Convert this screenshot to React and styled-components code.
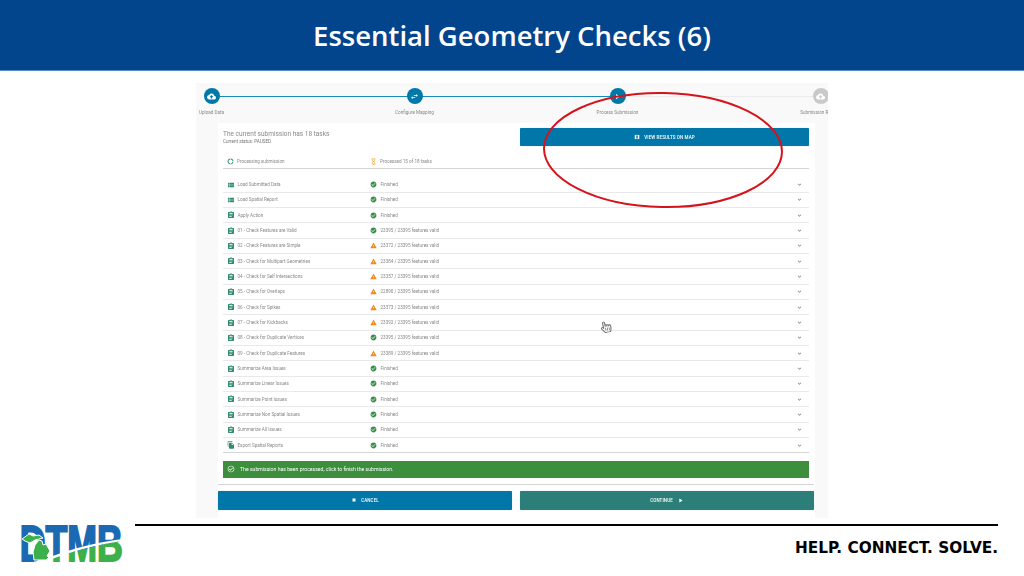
import styled, { createGlobalStyle } from "styled-components";
import {
    MdAssignment,
    MdCheckCircle,
    MdCloudUpload,
    MdDonutLarge,
    MdExpandMore,
    MdFileCopy,
    MdMap,
    MdOutlineCheckCircle,
    MdOutlineHourglassEmpty,
    MdPlayArrow,
    MdStop,
    MdSwapHoriz,
    MdViewList,
    MdWarning,
} from "react-icons/md";
import { FaRegHandPointer } from "react-icons/fa";

const GlobalStyle = createGlobalStyle`
    html, body {
        margin: 0;
        padding: 0;
        background: #fff;
    }
    * {
        box-sizing: border-box;
    }
`;

const Slide = styled.div`
    position: relative;
    width: 1024px;
    height: 576px;
    overflow: hidden;
    display: flex;
    flex-direction: column;
    background: #fff;
`;

const Header = styled.header`
    height: 71px;
    flex: none;
    display: flex;
    align-items: center;
    justify-content: center;
    background: #03458c;
    border-bottom: 1px solid #5b8fc4;
`;

const Title = styled.h1`
    margin: 0;
    color: #fff;
    font: 600 27.5px "Open Sans", sans-serif;
`;

const Panel = styled.main`
    position: relative;
    width: 632px;
    height: 435px;
    margin: 12px auto 0;
    background: #f9f9f9;
    overflow: hidden;
    font-family: Roboto, sans-serif;
    filter: blur(0.35px);
`;

const Stepper = styled.div`
    display: flex;
    height: 40px;
    padding-top: 5px;
    margin-left: -86px;
`;

const Step = styled.div`
    position: relative;
    flex: none;
    width: 203px;
    display: flex;
    flex-direction: column;
    align-items: center;
    &::after {
        content: "";
        display: ${(p) => (p.$last ? "none" : "block")};
        position: absolute;
        top: 7.5px;
        left: 101px;
        width: 203px;
        height: 1px;
        background: ${(p) => (p.$lineOn ? "#1a8abb" : "#ececec")};
    }
`;

const StepDot = styled.span`
    position: relative;
    z-index: 1;
    width: 16px;
    height: 16px;
    border-radius: 50%;
    display: flex;
    align-items: center;
    justify-content: center;
    color: #fff;
    font-size: 9px;
    background: ${(p) => (p.$off ? "#c9c9c9" : "#0078a8")};
`;

const StepLabel = styled.span`
    margin-top: 5.5px;
    font-size: 4.6px;
    line-height: 6px;
    color: #888;
    white-space: nowrap;
`;

const Card = styled.section`
    width: 597px;
    margin-left: 22px;
    height: 395px;
    background: #fff;
`;

const Content = styled.div`
    padding: 5px 6px 0 5px;
`;

const Summary = styled.div`
    display: grid;
    grid-template-columns: 297px 1fr;
    height: 18px;
`;

const SummaryTitle = styled.div`
    padding-top: 1.5px;
    font-size: 6.5px;
    line-height: 8px;
    color: #888;
`;

const SummaryStatus = styled.div`
    font-size: 4.6px;
    line-height: 7px;
    margin-top: 0.5px;
    color: #777;
`;

const Button = styled.button`
    height: ${(p) => p.$height || "19px"};
    border: 0;
    border-radius: 1px;
    padding: 0;
    display: flex;
    align-items: center;
    justify-content: center;
    gap: ${(p) => p.$gap || "4px"};
    color: #fff;
    font: 500 4.5px Roboto, sans-serif;
    letter-spacing: 0.1px;
    background: ${(p) => p.$bg || "#0077a8"};
    box-shadow: 0 0 1px rgba(0, 80, 120, 0.45);
`;

const Progress = styled.div`
    height: 23px;
    padding: 9px 0 0 4px;
    display: grid;
    grid-template-columns: 143px 1fr;
    border-bottom: 1px solid #d5d5d5;
    color: #888;
    font-size: 4.6px;
`;

const Cell = styled.div`
    display: flex;
    align-items: center;
    gap: ${(p) => p.$gap || "3px"};
    line-height: 7px;
    white-space: nowrap;
`;

const TaskList = styled.div`
    margin-top: 8.5px;
    display: grid;
    grid-template-rows: repeat(18, 15.33px);
`;

const TaskRow = styled.div`
    display: grid;
    grid-template-columns: 143.5px 1fr 12px;
    align-items: center;
    padding: 0 6px 0 3.5px;
    border-bottom: 1px solid #e9e9e9;
    color: #888;
    font-size: 4.6px;
    &:last-child {
        border-bottom-color: #d5d5d5;
    }
`;

const Chevron = styled(MdExpandMore)`
    justify-self: end;
    font-size: 7px;
    color: #777;
`;

const Banner = styled.div`
    height: 17px;
    margin-top: 7.5px;
    padding-left: 4px;
    display: flex;
    align-items: center;
    gap: 5px;
    background: #3d8f3e;
    color: #fff;
    font-size: 5.15px;
`;

const Actions = styled.div`
    margin-top: 6px;
    padding-top: 6px;
    width: 596px;
    display: grid;
    grid-template-columns: 294px 294px;
    gap: 8px;
    border-top: 1px solid #d5d5d5;
`;

const Ellipse = styled.svg`
    position: absolute;
    left: 536px;
    top: 85px;
    pointer-events: none;
`;

const Cursor = styled(FaRegHandPointer)`
    position: absolute;
    left: 600px;
    top: 321px;
    font-size: 12px;
    color: #777;
    transform: rotate(-12deg);
`;

const Footer = styled.footer`
    position: relative;
    flex: 1;
    display: grid;
    grid-template-columns: 103px 1fr;
    column-gap: 13px;
    padding: 6px 26px 0 19px;
`;

const Logo = styled.svg`
    display: block;
    overflow: visible;
`;

const FooterRight = styled.div`
    display: flex;
    flex-direction: column;
    align-items: flex-end;
`;

const Rule = styled.div`
    align-self: stretch;
    height: 2px;
    background: #000;
`;

const Motto = styled.div`
    margin-top: 13px;
    color: #000;
    font: 700 15.3px "DejaVu Sans", sans-serif;
    line-height: 18px;
`;

const tasks = [
    ["list", "Load Submitted Data", "Finished"],
    ["list", "Load Spatial Report", "Finished"],
    ["note", "Apply Action", "Finished"],
    ["note", "01 - Check Features are Valid", "23395"],
    ["note", "02 - Check Features are Simple", "23372", true],
    ["note", "03 - Check for Multipart Geometries", "23384", true],
    ["note", "04 - Check for Self Intersections", "23357", true],
    ["note", "05 - Check for Overlaps", "22890", true],
    ["note", "06 - Check for Spikes", "23373", true],
    ["note", "07 - Check for Kickbacks", "23392", true],
    ["note", "08 - Check for Duplicate Vertices", "23395"],
    ["note", "09 - Check for Duplicate Features", "23389", true],
    ["note", "Summarize Area Issues", "Finished"],
    ["note", "Summarize Linear Issues", "Finished"],
    ["note", "Summarize Point Issues", "Finished"],
    ["note", "Summarize Non Spatial Issues", "Finished"],
    ["note", "Summarize All Issues", "Finished"],
    ["copy", "Export Spatial Reports", "Finished"],
];

const taskIcons = { list: MdViewList, note: MdAssignment, copy: MdFileCopy };

const Task = ({ icon, name, result, warn }) => {
    const Icon = taskIcons[icon];
    const text = result === "Finished" ? result : `${result} / 23395 features valid`;
    return (
        <TaskRow>
            <Cell>
                <Icon size={8} color="#2f8a70" />
                {name}
            </Cell>
            <Cell $gap="3.5px">
                {warn ? (
                    <MdWarning size={7} color="#ef8b1d" />
                ) : (
                    <MdCheckCircle size={7} color="#388e4a" />
                )}
                {text}
            </Cell>
            <Chevron />
        </TaskRow>
    );
};

const DtmbLogo = () => (
    <Logo width="103" height="38" viewBox="0 0 103 38">
        <defs>
            <linearGradient
                id="logoFill"
                gradientUnits="userSpaceOnUse"
                x1="86"
                y1="15.75"
                x2="89.5"
                y2="35.75"
            >
                <stop offset="0.5" stopColor="#1a69b2" />
                <stop offset="0.5" stopColor="#3cb04a" />
            </linearGradient>
        </defs>
        <text
            x="1"
            y="36.5"
            transform="scale(0.715 1)"
            fontFamily="Liberation Sans"
            fontWeight="700"
            fontSize="50"
            fill="url(#logoFill)"
            stroke="url(#logoFill)"
            strokeWidth="2"
        >
            DTMB
        </text>
        <path d="M26 35 C46 27 72 19 103 15 L103 17 C74 21 48 29 28 37 Z" fill="#fff" />
        <path
            d="M3 15 L10 10 L14 12 L20 11 L24 14 L16 16 L11 19 L6 17 Z M15 36 L14 28 L16 21 L20 16 L23 17 L24 21 L27 20 L31 27 L28 32 L30 33 L27 36 Z"
            fill="#3cb04a"
            stroke="#fff"
            strokeWidth="1"
        />
    </Logo>
);

const App = () => (
    <Slide>
        <GlobalStyle />
        <Header>
            <Title>Essential Geometry Checks (6)</Title>
        </Header>
        <Panel>
            <Stepper>
                <Step $lineOn>
                    <StepDot>
                        <MdCloudUpload />
                    </StepDot>
                    <StepLabel>Upload Data</StepLabel>
                </Step>
                <Step $lineOn>
                    <StepDot>
                        <MdSwapHoriz />
                    </StepDot>
                    <StepLabel>Configure Mapping</StepLabel>
                </Step>
                <Step>
                    <StepDot>
                        <MdPlayArrow />
                    </StepDot>
                    <StepLabel>Process Submission</StepLabel>
                </Step>
                <Step $last>
                    <StepDot $off>
                        <MdCloudUpload />
                    </StepDot>
                    <StepLabel>Submission Results</StepLabel>
                </Step>
            </Stepper>
            <Card>
                <Content>
                    <Summary>
                        <div>
                            <SummaryTitle>The current submission has 18 tasks</SummaryTitle>
                            <SummaryStatus>Current status: PAUSED</SummaryStatus>
                        </div>
                        <Button $height="18px">
                            <MdMap size={6} />
                            VIEW RESULTS ON MAP
                        </Button>
                    </Summary>
                    <Progress>
                        <Cell>
                            <MdDonutLarge size={7} color="#2f8a70" />
                            Processing submission
                        </Cell>
                        <Cell>
                            <MdOutlineHourglassEmpty size={7} color="#f0a030" />
                            Processed 15 of 18 tasks
                        </Cell>
                    </Progress>
                    <TaskList>
                        {tasks.map(([icon, name, result, warn]) => (
                            <Task key={name} icon={icon} name={name} result={result} warn={warn} />
                        ))}
                    </TaskList>
                    <Banner>
                        <MdOutlineCheckCircle size={8} />
                        The submission has been processed, click to finish the submission.
                    </Banner>
                </Content>
                <Actions>
                    <Button>
                        <MdStop size={6} />
                        CANCEL
                    </Button>
                    <Button $bg="#2b7f78">
                        CONTINUE
                        <MdPlayArrow size={7} />
                    </Button>
                </Actions>
            </Card>
        </Panel>
        <Ellipse width="254" height="132" viewBox="0 0 254 132">
            <ellipse
                cx="127"
                cy="65"
                rx="119"
                ry="57"
                fill="none"
                stroke="#d5131c"
                strokeWidth="2"
                transform="rotate(1 127 65)"
            />
        </Ellipse>
        <Cursor />
        <Footer>
            <DtmbLogo />
            <FooterRight>
                <Rule />
                <Motto>HELP. CONNECT. SOLVE.</Motto>
            </FooterRight>
        </Footer>
    </Slide>
);

export default App;
